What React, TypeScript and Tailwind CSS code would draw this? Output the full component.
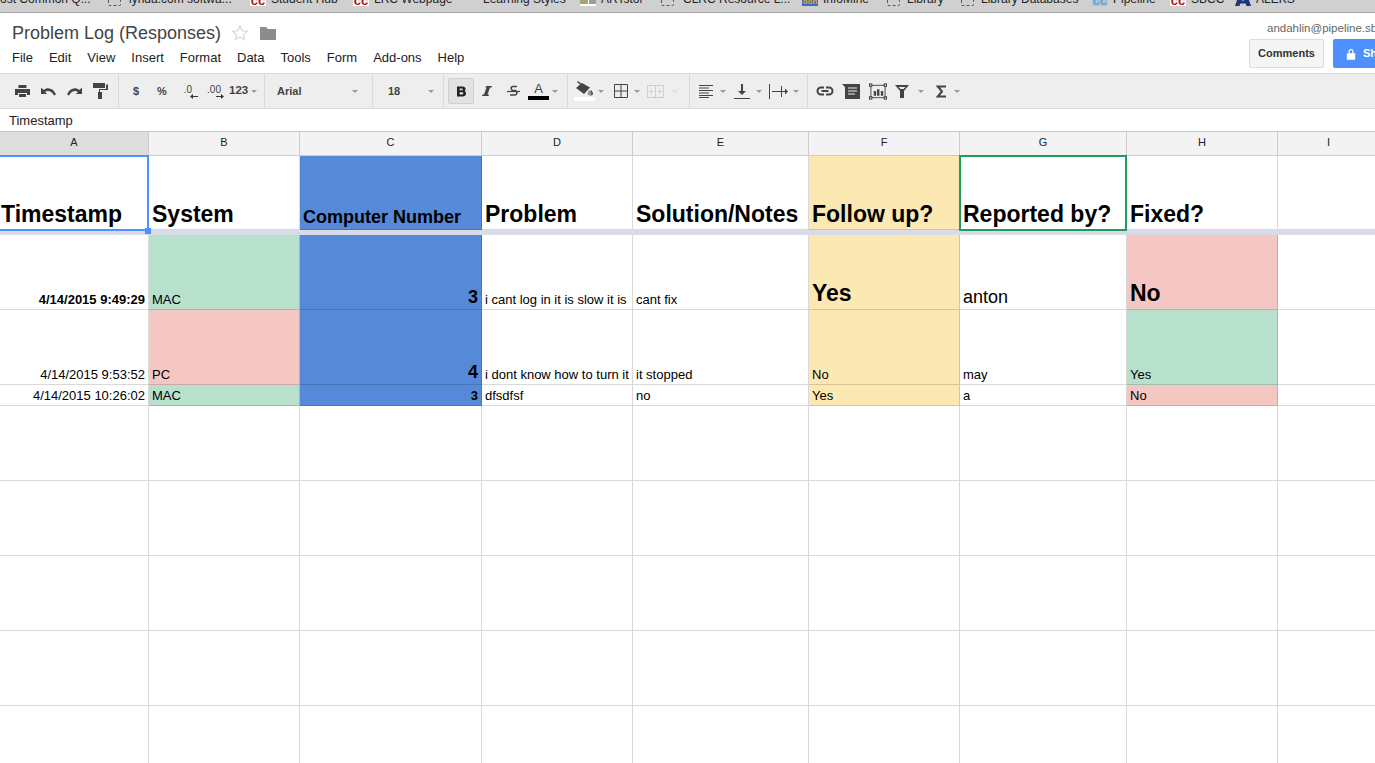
import type { ReactNode } from "react";

const font = "font-['Liberation_Sans',Arial,sans-serif]";
const gridCols = "grid grid-cols-[149px_151px_182px_151px_176px_151px_167px_151px_102px]";

function DashedIcon() {
  return <span className="inline-block h-[13px] w-[13px] shrink-0 rounded-[2px] border border-dashed border-[#555]" />;
}

function CcIcon() {
  return (
    <span className="flex h-[16px] w-[16px] shrink-0 items-end justify-center bg-white text-[13px] font-bold leading-[10px] text-[#b01020]">
      cc
    </span>
  );
}

function TileIcon({ kind }: { kind: "art" | "info" | "pipe" | "aleks" }) {
  if (kind === "art") {
    return (
      <span className="flex h-[16px] w-[16px] shrink-0 gap-[1px] bg-white pb-[2px]">
        <span className="flex-1 bg-[#a8a46c]" />
        <span className="flex-1 bg-[#8fa39b]" />
      </span>
    );
  }
  if (kind === "info") {
    return (
      <span className="flex h-[16px] w-[16px] shrink-0 items-end justify-center bg-[#3a6fc0] text-[8px] font-bold leading-[9px] text-[#e8a020]">
        oon
      </span>
    );
  }
  if (kind === "pipe") {
    return (
      <span className="flex h-[16px] w-[16px] shrink-0 items-end justify-center bg-[#a9c6e4] text-[13px] font-bold leading-[10px] text-[#6f9bc8]">
        cc
      </span>
    );
  }
  return (
    <svg viewBox="0 0 16 16" className="h-[16px] w-[16px] shrink-0">
      <path
        fillRule="evenodd"
        d="M5.500 0h5L16 16h-4.500l-.8-2.600H5.300L4.500 16H0zM8 7l-1.500 3.500h3z"
        fill="#17387a"
      />
    </svg>
  );
}

const bookmarks: { w: number; gap?: number; label: string; icon?: ReactNode }[] = [
  { w: 108, label: "ost Common Q..." },
  { w: 142, gap: 8, label: "lynda.com softwa...", icon: <DashedIcon /> },
  { w: 103, gap: 5, label: "Student Hub", icon: <CcIcon /> },
  { w: 130, gap: 5, label: "LRC Webpage", icon: <CcIcon /> },
  { w: 97, label: "Learning Styles" },
  { w: 81, gap: 5, label: "ARTstor", icon: <TileIcon kind="art" /> },
  { w: 141, gap: 9, label: "CLRC Resource L...", icon: <DashedIcon /> },
  { w: 85, gap: 5, label: "InfoMine", icon: <TileIcon kind="info" /> },
  { w: 74, gap: 7, label: "Library", icon: <DashedIcon /> },
  { w: 131, gap: 7, label: "Library Databases", icon: <DashedIcon /> },
  { w: 78, gap: 5, label: "Pipeline", icon: <TileIcon kind="pipe" /> },
  { w: 65, gap: 5, label: "SBCC", icon: <CcIcon /> },
  { w: 80, gap: 5, label: "ALEKS", icon: <TileIcon kind="aleks" /> },
];

function BookmarkBar() {
  return (
    <div className="flex h-[13px] overflow-hidden border-b border-[#a8a8a8] bg-[#d0d0d0] text-[12px] text-[#222]">
      {bookmarks.map((b) => (
        <div key={b.label} className="flex shrink-0 items-start" style={{ width: b.w, gap: b.gap ?? 0 }}>
          {b.icon && <span className="-mt-[10px] flex h-[16px] items-end">{b.icon}</span>}
          <span className="-mt-[9px] whitespace-nowrap leading-[16px]">{b.label}</span>
        </div>
      ))}
    </div>
  );
}

const menu = ["File", "Edit", "View", "Insert", "Format", "Data", "Tools", "Form", "Add-ons", "Help"];

function TitleBar() {
  return (
    <div className="flex h-[60px] justify-between bg-white pl-[12px]">
      <div>
        <div className="flex items-center pt-[9px]">
          <span className="text-[18px] leading-[22px] text-[#444]">Problem Log (Responses)</span>
          <svg viewBox="0 0 24 24" className="ml-[10px] h-[18px] w-[18px]" fill="none" stroke="#d4d4d4" strokeWidth="1.4">
            <path d="M12 2.5l2.900 6.500 7 .7-5.300 4.600 1.600 6.900L12 17l-6.200 3.700 1.600-6.900L2.100 9.700l7-.7z" />
          </svg>
          <svg viewBox="0 0 16 14" className="ml-[11px] h-[14px] w-[16px]">
            <path d="M0 1h6l2 2h8v11H0z" fill="#8c8c8c" />
          </svg>
        </div>
        <div className="mt-[5px] flex gap-[16px] text-[13px] leading-[18px] text-[#222]">
          {menu.map((m) => (
            <span key={m}>{m}</span>
          ))}
        </div>
      </div>
      <div className="w-[126px] shrink-0 overflow-hidden">
        <div className="ml-[18px] whitespace-nowrap pt-[8px] text-[11.5px] leading-[14px] text-[#666]">
          andahlin@pipeline.sbcc.edu
        </div>
        <div className="mt-[4px] flex w-[200px] gap-[9px]">
          <div className="flex h-[29px] w-[75px] items-center justify-center rounded-[2px] border border-[#dcdcdc] bg-[#f5f5f5] text-[11px] font-bold text-[#333]">
            Comments
          </div>
          <div className="flex h-[29px] w-[100px] items-center gap-[7px] rounded-[2px] bg-[#4d90fe] pl-[13px] text-[11px] font-bold text-white">
            <svg viewBox="0 0 12 14" className="h-[12px] w-[10px]">
              <path d="M1 6h10v8H1z M3 6V4a3 3 0 0 1 6 0v2H7.500V4a1.500 1.500 0 0 0-3 0v2z" fill="#fff" />
            </svg>
            Share
          </div>
        </div>
      </div>
    </div>
  );
}

function Caret({ light, ml = 0 }: { light?: boolean; ml?: number }) {
  return (
    <span
      className={`inline-block h-0 w-0 shrink-0 border-x-[3px] border-t-[3px] border-x-transparent ${
        light ? "border-t-[#ddd]" : "border-t-[#999]"
      }`}
      style={{ marginLeft: ml }}
    />
  );
}

function Btn({ children }: { children: ReactNode }) {
  return <span className="flex h-[26px] w-[26px] shrink-0 items-center justify-center">{children}</span>;
}

function Group({ w, pl, children }: { w: number; pl: number; children: ReactNode }) {
  return (
    <div
      className="flex h-full shrink-0 items-center border-r border-[#dadada]"
      style={{ width: w, paddingLeft: pl }}
    >
      {children}
    </div>
  );
}

const ic = "#444";

function Toolbar() {
  return (
    <div className="flex h-[36px] items-center overflow-hidden border-y border-[#dadada] bg-[#eeeeee] text-[11px] font-bold text-[#444]">
      <Group w={119} pl={9}>
        <Btn>
          <svg viewBox="0 0 15 13" className="h-[13px] w-[15px]" fill={ic}>
            <path fillRule="evenodd" d="M3.500 0h8v3h-8zM0 4h15v6h-3V8H3v2H0zM4 9h7v3H4z" />
          </svg>
        </Btn>
        <Btn>
          <svg viewBox="0 0 15 9" className="h-[9px] w-[15px]" fill={ic}>
            <path d="M0 .5V7h6.200L4 4.900C6.500 3 10.500 3.500 13 8.500L15 7.500C12.500 1.500 7 -.5 2.600 2.900z" />
          </svg>
        </Btn>
        <Btn>
          <svg viewBox="0 0 15 9" className="h-[9px] w-[15px]" fill={ic}>
            <path d="M15 .5V7H8.800L11 4.900C8.500 3 4.500 3.500 2 8.500L0 7.500C2.500 1.500 8 -.5 12.400 2.900z" />
          </svg>
        </Btn>
        <Btn>
          <svg viewBox="0 0 15 16" className="h-[16px] w-[15px]" fill={ic}>
            <path d="M0 0h12v5H0zM13 1.500h2V7H7v2H6V6h7zM5 9h4v7H5z" />
          </svg>
        </Btn>
      </Group>
      <Group w={146} pl={4}>
        <Btn>$</Btn>
        <Btn>%</Btn>
        <Btn>
          <span className="relative -mt-[3px] text-[10px] font-normal leading-none">
            .0
            <svg viewBox="0 0 8 5" className="absolute left-[6px] top-[9px] h-[5px] w-[8px]" fill="#333">
              <path d="M0 2.500L3 0v2h5v1H3v2z" />
            </svg>
          </span>
        </Btn>
        <Btn>
          <span className="relative -mt-[3px] text-[10px] font-normal leading-none">
            .00
            <svg viewBox="0 0 8 5" className="absolute left-[9px] top-[9px] h-[5px] w-[8px]" fill="#333">
              <path d="M8 2.500L5 0v2H0v1h5v2z" />
            </svg>
          </span>
        </Btn>
        <span className="ml-[2px] flex items-center gap-[3px] text-[11.5px]">
          123 <Caret />
        </span>
      </Group>
      <Group w={108} pl={12}>
        <span className="w-[75px]">Arial</span>
        <Caret />
      </Group>
      <Group w={71} pl={15}>
        <span className="w-[40px]">18</span>
        <Caret />
      </Group>
      <Group w={124} pl={4}>
        <span className="flex h-[26px] w-[26px] shrink-0 items-center justify-center rounded-[2px] border border-[#d0d0d0] bg-[#e2e2e2]">
          <svg viewBox="0 0 10 11" className="h-[11px] w-[9px]" fill="#222">
            <path
              fillRule="evenodd"
              d="M0 0h6c2.500 0 3.500 1.300 3.500 2.800 0 1-.5 1.800-1.400 2.200 1.200.4 1.900 1.300 1.900 2.600C10 9.700 8.500 11 6.200 11H0zM3 2.200v2h2.300c.7 0 1.100-.4 1.100-1s-.4-1-1.100-1zM3 6.300v2.500h2.700c.9 0 1.300-.5 1.300-1.250s-.4-1.250-1.300-1.250z"
            />
          </svg>
        </span>
        <Btn>
          <svg viewBox="0 0 10 10" className="h-[10px] w-[10px]" fill={ic}>
            <path d="M4 0h6L9.500 1.500H8L5.500 8.500H7L6.500 10H0l.5-1.500H2L4.500 1.500H3.500z" />
          </svg>
        </Btn>
        <Btn>
          <svg viewBox="0 0 13 12" className="h-[12px] w-[13px]" fill="none" stroke={ic}>
            <path d="M0 6.500h13" strokeWidth="1.200" />
            <path d="M10 1.500H6C3.500 1.500 3.500 5 6 5.500h2c2.500.5 2.500 4.500-.5 4.500H3" strokeWidth="1.500" />
          </svg>
        </Btn>
        <span className="flex w-[25px] shrink-0 flex-col items-center text-[13px] font-normal leading-[13px]">
          A<span className="mt-[1px] h-[4px] w-[21px] bg-black" />
        </span>
        <Caret ml={1} />
      </Group>
      <Group w={122} pl={6}>
        <span className="flex w-[21px] shrink-0 flex-col items-center">
          <svg viewBox="0 0 17 15" className="h-[15px] w-[17px]" fill={ic}>
            <path d="M2 0l3 2.600 1-.6 8 4.500L8 13 0 7l4-3.400L1 1zM15 9c1 1.500 2 2.500 2 3.500a2 2 0 0 1-4 0c0-1 1-2 2-3.500z" />
            <path d="M13 9.500c-.8 1.200-1.500 2-1.500 3a2 2 0 0 0 4 0c0-1-.7-1.800-1.500-3z" fill="#999" />
          </svg>
          <span className="mt-[1px] h-[4px] w-[21px] bg-white" />
        </span>
        <Caret ml={3} />
        <svg viewBox="0 0 14 14" className="ml-[10px] h-[14px] w-[14px] shrink-0" fill="none" stroke={ic}>
          <path d="M.5.500h13v13H.5zM7 .5v13M.5 7h13" />
        </svg>
        <Caret ml={6} />
        <svg viewBox="0 0 17 13" className="ml-[7px] h-[13px] w-[17px] shrink-0" fill="none" stroke="#cfcfcf">
          <path d="M.5.500h16v12H.5zM8.500 .5v12" />
          <path d="M1.500 6.500h4M5.500 6.500L3.500 4.500M5.500 6.500L3.500 8.500M15.500 6.500h-4M11.500 6.500l2-2M11.500 6.500l2 2" />
        </svg>
        <Caret light ml={8} />
      </Group>
      <Group w={118} pl={9}>
        <svg viewBox="0 0 14 13" className="h-[13px] w-[14px] shrink-0" fill="none" stroke={ic}>
          <path d="M0 .5h14M0 3h10M0 5.500h14M0 8h10M0 10.500h14M0 12.500h10" />
        </svg>
        <Caret ml={7} />
        <svg viewBox="0 0 16 15" className="ml-[8px] h-[15px] w-[16px] shrink-0" fill={ic}>
          <path d="M7 0h2v7h3l-4 4-4-4h3zM0 14h16v1H0z" />
        </svg>
        <Caret ml={6} />
        <svg viewBox="0 0 21 15" className="ml-[7px] h-[15px] w-[21px] shrink-0" fill={ic}>
          <path d="M0 0h1v15H0zM12 2h1v11h-1zM3 7h13V4.500L19 7.500l-3 3V8H3z" />
        </svg>
        <Caret ml={3} />
      </Group>
      <div className="flex h-full items-center pl-[8px]">
        <svg viewBox="0 0 18 10" className="h-[10px] w-[18px] shrink-0" fill="none" stroke={ic} strokeWidth="2">
          <path d="M8 1.500H5a3.500 3.500 0 0 0 0 7h3M10 1.500h3a3.500 3.500 0 0 1 0 7h-3M5.500 5h7" />
        </svg>
        <svg viewBox="0 0 18 15" className="ml-[8px] h-[15px] w-[18px] shrink-0" fill={ic}>
          <path fillRule="evenodd" d="M0 0h18v15H3V3zM6 3.500v1h9v-1zM6 6.500v1h9v-1zM6 9.500v1h7v-1z" />
        </svg>
        <svg viewBox="0 0 19 17" className="ml-[9px] h-[17px] w-[18px] shrink-0">
          <path d="M2 2h15v13H2z" fill="none" stroke={ic} />
          <path d="M5 8h2.500v5H5zM8.500 6H11v7H8.500zM12.500 8H15v5h-2.500z" fill={ic} />
          <g fill="#eee" stroke="#333">
            <rect x=".5" y=".5" width="2.500" height="2.500" />
            <rect x="16" y=".5" width="2.500" height="2.500" />
            <rect x=".5" y="14" width="2.500" height="2.500" />
            <rect x="16" y="14" width="2.500" height="2.500" />
          </g>
        </svg>
        <svg viewBox="0 0 14 13" className="ml-[8px] h-[13px] w-[14px] shrink-0" fill={ic}>
          <path fillRule="evenodd" d="M0 0h14L9 6v7H5V6zM3.500 2L5.500 4h3l2-2z" />
        </svg>
        <Caret ml={9} />
        <svg viewBox="0 0 10 13" className="ml-[12px] h-[13px] w-[10px] shrink-0" fill="none" stroke={ic} strokeWidth="2">
          <path d="M10 1.500H1.800L6 6.500 1.800 11.500H10" />
        </svg>
        <Caret ml={8} />
      </div>
    </div>
  );
}

type Cell = { text?: string; cls?: string; bg?: string; right?: boolean };

function SheetRow({ h, cells }: { h: number; cells: Cell[] }) {
  return (
    <div className={gridCols} style={{ height: h }}>
      {cells.map((c, i) => (
        <div
          key={i}
          className={`relative flex items-end overflow-hidden whitespace-nowrap border-r border-b border-black/15 px-[3px] text-black ${
            c.bg ?? "bg-white"
          } ${c.right ? "justify-end" : ""} ${c.cls ?? "text-[13px] leading-[18px]"}`}
        >
          {c.text}
        </div>
      ))}
    </div>
  );
}

const green = "bg-[#b7e1cd]";
const red = "bg-[#f4c7c3]";
const blue = "bg-[#568ad8]";
const yellow = "bg-[#fce8b2]";
const headCls = "text-[23px] font-bold leading-[30px]";

const colLetters = ["A", "B", "C", "D", "E", "F", "G", "H", "I"];
const emptyCells: Cell[] = colLetters.map(() => ({}));

function Sheet() {
  return (
    <div>
      <div className={`${gridCols} h-[25px] border-t border-[#c8c8c8]`}>
        {colLetters.map((l, i) => (
          <div
            key={l}
            className={`flex items-center justify-center border-r border-b border-[#cccccc] pb-[2px] text-[11px] text-[#222] ${
              i === 0 ? "bg-[#dddddd]" : "bg-[#f3f3f3]"
            }`}
          >
            {l}
          </div>
        ))}
      </div>
      <div className="relative">
        <SheetRow
          h={74}
          cells={[
            { text: "Timestamp", cls: `${headCls} !px-[1px]` },
            { text: "System", cls: headCls },
            { text: "Computer Number", bg: blue, cls: "text-[18px] font-bold leading-[24px]" },
            { text: "Problem", cls: headCls },
            { text: "Solution/Notes", cls: headCls },
            { text: "Follow up?", bg: yellow, cls: headCls },
            { text: "Reported by?", cls: headCls },
            { text: "Fixed?", cls: headCls },
            {},
          ]}
        />
        <div className="absolute -top-[1px] left-0 h-[76px] w-[149px] border-2 border-l-0 border-[#4d90fe]" />
        <div className="absolute left-[145px] top-[72px] h-[6px] w-[6px] bg-[#4d90fe]" />
        <div className="absolute -top-[1px] left-[959px] h-[76px] w-[168px] border-2 border-[#1f9d61]" />
      </div>
      <div className="h-[5px] bg-[#d9dce6]" />
      <SheetRow
        h={75}
        cells={[
          { text: "4/14/2015 9:49:29", right: true, cls: "text-[13px] font-bold leading-[18px]" },
          { text: "MAC", bg: green },
          { text: "3", bg: blue, right: true, cls: "text-[18px] font-bold leading-[24px]" },
          { text: "i cant log in it is slow it is" },
          { text: "cant fix" },
          { text: "Yes", bg: yellow, cls: "text-[23px] font-bold leading-[32px]" },
          { text: "anton", cls: "text-[18px] leading-[24px]" },
          { text: "No", bg: red, cls: "text-[23px] font-bold leading-[32px]" },
          {},
        ]}
      />
      <SheetRow
        h={75}
        cells={[
          { text: "4/14/2015 9:53:52", right: true },
          { text: "PC", bg: red },
          { text: "4", bg: blue, right: true, cls: "text-[18px] font-bold leading-[24px]" },
          { text: "i dont know how to turn it" },
          { text: "it stopped" },
          { text: "No", bg: yellow },
          { text: "may" },
          { text: "Yes", bg: green },
          {},
        ]}
      />
      <SheetRow
        h={21}
        cells={[
          { text: "4/14/2015 10:26:02", right: true },
          { text: "MAC", bg: green },
          { text: "3", bg: blue, right: true, cls: "text-[13px] font-bold leading-[18px]" },
          { text: "dfsdfsf" },
          { text: "no" },
          { text: "Yes", bg: yellow },
          { text: "a" },
          { text: "No", bg: red },
          {},
        ]}
      />
      {[0, 1, 2, 3, 4].map((r) => (
        <SheetRow key={r} h={75} cells={emptyCells} />
      ))}
    </div>
  );
}

export default function App() {
  return (
    <div className={`h-[763px] w-[1375px] overflow-hidden bg-white ${font}`}>
      <BookmarkBar />
      <TitleBar />
      <Toolbar />
      <div className="h-[22px] pl-[9px] pt-[1px] text-[13px] leading-[22px] text-[#222]">Timestamp</div>
      <Sheet />
    </div>
  );
}
